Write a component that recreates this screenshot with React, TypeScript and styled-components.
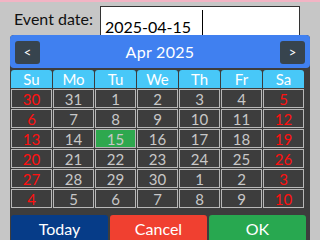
import styled, { createGlobalStyle } from 'styled-components';

const GlobalStyle = createGlobalStyle`
  html, body {
    margin: 0;
    padding: 0;
    background: #c6c6c6;
    font-family: Lato, 'Noto Sans', sans-serif;
  }
`;

const Screen = styled.div`
  width: 320px;
  height: 240px;
  overflow: hidden;
  background: #c6c6c6;
  display: flex;
  flex-direction: column;
`;

const TopBar = styled.div`
  height: 2px;
  background: #f2b4c4;
`;

const FieldRow = styled.div`
  display: flex;
  align-items: flex-start;
  padding-top: 4px;
  height: 29px;
`;

const Label = styled.div`
  width: 86px;
  padding-left: 14px;
  padding-top: 3px;
  font-size: 16px;
  color: #111;
`;

const InputBox = styled.div`
  width: 200px;
  height: 29px;
  border: 1px solid #333;
  border-bottom: none;
  background: #fff;
  display: flex;
  align-items: flex-end;
  padding-left: 4px;
  box-sizing: border-box;
`;

const InputText = styled.span`
  font-size: 16px;
  color: #000;
  line-height: 14px;
  padding-bottom: 1px;
`;

const Caret = styled.span`
  width: 1px;
  height: 25px;
  background: #000;
  margin-left: 11px;
  align-self: flex-start;
  margin-top: 3px;
`;

const Panel = styled.div`
  margin: 0 10px;
  flex: 1;
  background: #3d3d3d;
  border-radius: 4px 4px 0 0;
  display: flex;
  flex-direction: column;
`;

const Header = styled.div`
  height: 33px;
  background: #4080f0;
  border-radius: 4px;
  display: flex;
  align-items: center;
  justify-content: space-between;
  padding: 0 5px;
  box-sizing: border-box;
`;

const NavButton = styled.div`
  width: 25px;
  height: 23px;
  margin-top: 1px;
  background: #37444e;
  border-radius: 3px;
  color: #fff;
  font-size: 13px;
  display: flex;
  align-items: center;
  justify-content: center;
`;

const Title = styled.div`
  color: #fff;
  font-size: 16px;
  letter-spacing: 0.3px;
`;

const Grid = styled.div`
  display: grid;
  grid-template-columns: repeat(7, 41px);
  grid-auto-rows: 19px;
  gap: 1px;
  margin-left: 1px;
`;

const DayNames = styled(Grid)`
  margin-top: 2px;
  margin-bottom: 1px;
  grid-auto-rows: 18px;
`;

const DayName = styled.div`
  background: #48c8f8;
  border-radius: 3px 3px 0 0;
  color: #fff;
  font-size: 15px;
  display: flex;
  align-items: center;
  justify-content: center;
`;

const Cell = styled.div<{ $weekend: boolean; $selected: boolean }>`
  border: 1px solid #b8b8b8;
  box-sizing: border-box;
  background: ${p => (p.$selected ? '#2ea84e' : '#3d3d3d')};
  color: ${p => (p.$weekend ? '#ff1010' : '#c8c8c8')};
  font-size: 15px;
  display: flex;
  align-items: center;
  justify-content: center;
`;

const Actions = styled.div`
  display: grid;
  grid-template-columns: repeat(3, 97px);
  gap: 2px;
  margin: 7px 0 0 1px;
  flex: 1;
`;

const Action = styled.div<{ $color: string }>`
  background: ${p => p.$color};
  border-radius: 3px 3px 0 0;
  color: #fff;
  font-size: 16px;
  display: flex;
  justify-content: center;
  padding-top: 4px;
`;

const days = ['Su', 'Mo', 'Tu', 'We', 'Th', 'Fr', 'Sa'];

const dates = [
  30, 31, 1, 2, 3, 4, 5,
  6, 7, 8, 9, 10, 11, 12,
  13, 14, 15, 16, 17, 18, 19,
  20, 21, 22, 23, 24, 25, 26,
  27, 28, 29, 30, 1, 2, 3,
  4, 5, 6, 7, 8, 9, 10,
];

export default function App() {
  return (
    <Screen>
      <GlobalStyle />
      <TopBar />
      <FieldRow>
        <Label>Event date:</Label>
        <InputBox>
          <InputText>2025-04-15</InputText>
          <Caret />
        </InputBox>
      </FieldRow>
      <Panel>
        <Header>
          <NavButton>&lt;</NavButton>
          <Title>Apr 2025</Title>
          <NavButton>&gt;</NavButton>
        </Header>
        <DayNames>
          {days.map(d => (
            <DayName key={d}>{d}</DayName>
          ))}
        </DayNames>
        <Grid>
          {dates.map((d, i) => (
            <Cell key={i} $weekend={i % 7 === 0 || i % 7 === 6} $selected={i === 16}>
              {d}
            </Cell>
          ))}
        </Grid>
        <Actions>
          <Action $color="#063c88">Today</Action>
          <Action $color="#f04030">Cancel</Action>
          <Action $color="#28a850">OK</Action>
        </Actions>
      </Panel>
    </Screen>
  );
}
